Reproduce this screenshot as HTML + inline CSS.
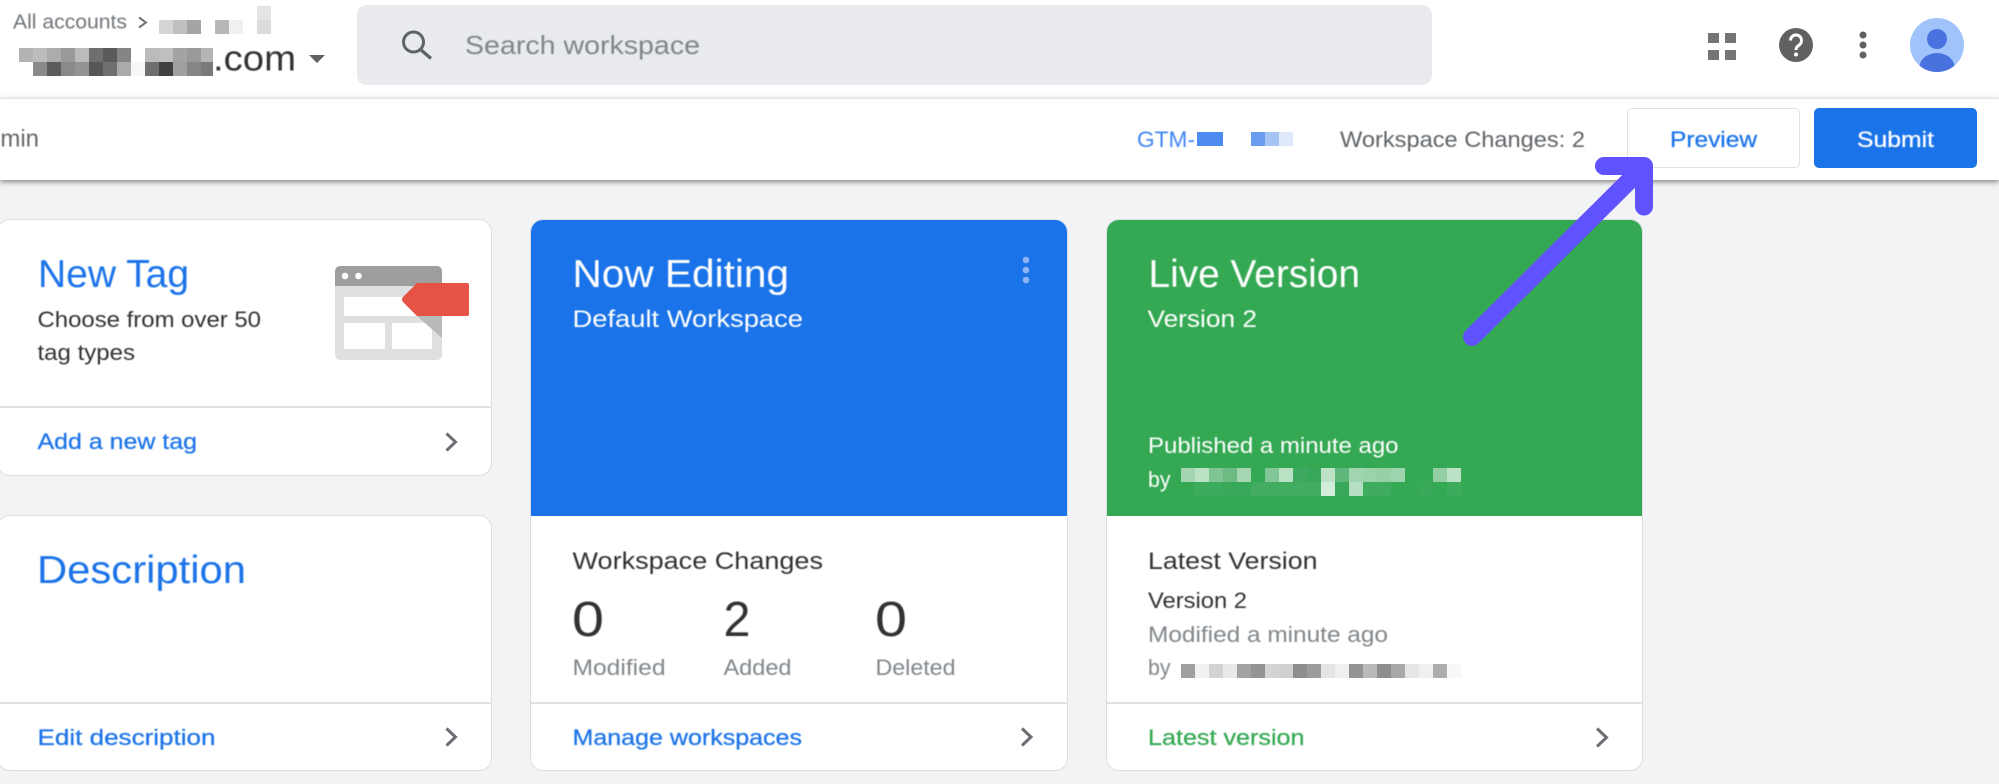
<!DOCTYPE html>
<html lang="en">
<head>
<meta charset="utf-8">
<title>Workspace overview</title>
<style>
html,body{margin:0;padding:0;background:#f1f3f4}
body{position:relative;width:1999px;height:784px;overflow:hidden;font-family:"Liberation Sans",sans-serif}
.abs{position:absolute;box-sizing:border-box}
.top{left:0;top:0;width:1999px;height:98px;background:#fff}
.bar{left:0;top:98px;width:1999px;height:82px;background:#fff;border-top:1.5px solid #e2e4ea;box-shadow:0 2px 5px rgba(0,0,0,.45)}
.search{left:357px;top:5px;width:1075px;height:80px;background:#e8eaed;border-radius:10px}
.card{background:#fff;border:1.5px solid #dcdee2;border-radius:13px;overflow:hidden}
.hd{position:absolute;left:-2px;right:-2px;top:-2px}
.dv{position:absolute;left:0;right:0;height:1.5px;background:#dfe1e4}
.btn{border-radius:5px}
svg{position:absolute;left:0;top:0}
text{font-family:"Liberation Sans",sans-serif;filter:url(#soft)}
.md{stroke-width:.25px;paint-order:stroke}
</style>
</head>
<body>
<div class="abs top"></div>
<div class="abs bar"></div>
<div class="abs search"></div>
<div class="abs btn" style="left:1627px;top:108px;width:173px;height:60px;background:#fff;border:1.5px solid #dfe1e5"></div>
<div class="abs btn" style="left:1814px;top:108px;width:163px;height:60px;background:#1a73e8"></div>

<div class="abs card" style="left:-3px;top:219px;width:495px;height:257px"><div class="dv" style="top:186px"></div></div>
<div class="abs card" style="left:-3px;top:515px;width:495px;height:256px"><div class="dv" style="top:186px"></div></div>
<div class="abs card" style="left:530px;top:219px;width:538px;height:552px"><div class="hd" style="height:298px;background:#1a73e8"></div><div class="dv" style="top:482px"></div></div>
<div class="abs card" style="left:1106px;top:219px;width:537px;height:552px"><div class="hd" style="height:298px;background:#34a853"></div><div class="dv" style="top:482px"></div></div>

<svg width="1999" height="784" viewBox="0 0 1999 784" xmlns="http://www.w3.org/2000/svg">
  <defs>
    <filter id="soft" x="-5%" y="-30%" width="110%" height="160%"><feGaussianBlur stdDeviation="0.4"/></filter>
    <clipPath id="av"><circle cx="1937" cy="45" r="27"/></clipPath>
  </defs>
  <!-- breadcrumb -->
  <text x="13" y="28.5" font-size="20" fill="#70757a" textLength="114" lengthAdjust="spacingAndGlyphs">All accounts</text>
  <path d="M139 17.5l7 5-7 5" fill="none" stroke="#70757a" stroke-width="2"/>
  <g shape-rendering="crispEdges">
    <rect x="159" y="20" width="14" height="14" fill="#d5d5d5"/><rect x="173" y="20" width="14" height="14" fill="#c0c0c0"/><rect x="187" y="20" width="14" height="14" fill="#a5a5a5"/>
    <rect x="215" y="20" width="14" height="14" fill="#b8b8b8"/><rect x="229" y="20" width="14" height="14" fill="#eef0f1"/>
    <rect x="257" y="6" width="14" height="14" fill="#e3e4e6"/><rect x="257" y="20" width="14" height="14" fill="#dcdcdc"/>
    <!-- account row 1 -->
    <rect x="19" y="48" width="14" height="14" fill="#b3b3b3"/><rect x="33" y="48" width="14" height="14" fill="#bcbcbc"/><rect x="47" y="48" width="14" height="14" fill="#acacac"/><rect x="61" y="48" width="14" height="14" fill="#999"/><rect x="75" y="48" width="14" height="14" fill="#bbb"/><rect x="89" y="48" width="14" height="14" fill="#6f6f6f"/><rect x="103" y="48" width="14" height="14" fill="#5a5a5a"/><rect x="117" y="48" width="14" height="14" fill="#858585"/><rect x="145" y="48" width="14" height="14" fill="#bbb"/><rect x="159" y="48" width="14" height="14" fill="#bfbfbf"/><rect x="173" y="48" width="14" height="14" fill="#a3a3a3"/><rect x="187" y="48" width="14" height="14" fill="#999"/><rect x="201" y="48" width="12" height="14" fill="#b4b6b5"/>
    <!-- account row 2 -->
    <rect x="33" y="62" width="14" height="14" fill="#8a8a8a"/><rect x="47" y="62" width="14" height="14" fill="#5c5c5c"/><rect x="61" y="62" width="14" height="14" fill="#8a8a8a"/><rect x="75" y="62" width="14" height="14" fill="#949494"/><rect x="89" y="62" width="14" height="14" fill="#575757"/><rect x="103" y="62" width="14" height="14" fill="#6f6f6f"/><rect x="117" y="62" width="14" height="14" fill="#aaa"/><rect x="131" y="62" width="14" height="14" fill="#f6f7f8"/><rect x="145" y="62" width="14" height="14" fill="#6e6e6e"/><rect x="159" y="62" width="14" height="14" fill="#404040"/><rect x="173" y="62" width="14" height="14" fill="#a0a0a0"/><rect x="187" y="62" width="14" height="14" fill="#868686"/><rect x="201" y="62" width="12" height="14" fill="#7a7a7a"/>
    <!-- GTM id -->
    <rect x="1197" y="132" width="26" height="14" fill="#4d8bf0"/><rect x="1251" y="132" width="14" height="14" fill="#6a9df0"/><rect x="1265" y="132" width="14" height="14" fill="#a5c4f5"/><rect x="1279" y="132" width="14" height="14" fill="#dfe9fb"/>
    <!-- published by row 1 -->
    <rect x="1181" y="468" width="14" height="14" fill="#a3d5b0"/><rect x="1195" y="468" width="14" height="14" fill="#bce2c6"/><rect x="1209" y="468" width="14" height="14" fill="#7fc492"/><rect x="1223" y="468" width="14" height="14" fill="#6dbb83"/><rect x="1237" y="468" width="14" height="14" fill="#a5d6b2"/><rect x="1265" y="468" width="14" height="14" fill="#82c697"/><rect x="1279" y="468" width="14" height="14" fill="#bbe1c5"/><rect x="1293" y="468" width="14" height="14" fill="#3fa95f"/><rect x="1307" y="468" width="14" height="14" fill="#37a85a"/><rect x="1321" y="468" width="14" height="14" fill="#bee2c8"/><rect x="1335" y="468" width="14" height="14" fill="#5fb67a"/><rect x="1349" y="468" width="14" height="14" fill="#a1d5b0"/><rect x="1363" y="468" width="14" height="14" fill="#9bd2aa"/><rect x="1377" y="468" width="14" height="14" fill="#97d0a7"/><rect x="1391" y="468" width="14" height="14" fill="#9dd3ad"/><rect x="1433" y="468" width="14" height="14" fill="#93cea4"/><rect x="1447" y="468" width="14" height="14" fill="#bbe2c7"/>
    <!-- published by row 2 -->
    <rect x="1195" y="482" width="28" height="14" fill="#3dab5c"/><rect x="1223" y="482" width="28" height="14" fill="#38a958"/><rect x="1251" y="482" width="70" height="14" fill="#42ad60"/><rect x="1321" y="482" width="14" height="14" fill="#d3eddb"/><rect x="1335" y="482" width="14" height="14" fill="#3aa85a"/><rect x="1349" y="482" width="14" height="14" fill="#b5dfc2"/><rect x="1363" y="482" width="28" height="14" fill="#3eab5d"/><rect x="1419" y="482" width="14" height="14" fill="#38a958"/><rect x="1447" y="482" width="14" height="14" fill="#3cab5b"/>
    <!-- modified by -->
    <rect x="1181" y="664" width="14" height="14" fill="#a0a0a0"/><rect x="1195" y="664" width="14" height="14" fill="#f1f1f2"/><rect x="1209" y="664" width="14" height="14" fill="#d2d3d3"/><rect x="1223" y="664" width="14" height="14" fill="#e8e9ea"/><rect x="1237" y="664" width="14" height="14" fill="#a3a3a3"/><rect x="1251" y="664" width="14" height="14" fill="#939393"/><rect x="1265" y="664" width="14" height="14" fill="#d3d4d6"/><rect x="1279" y="664" width="14" height="14" fill="#cfd0d0"/><rect x="1293" y="664" width="14" height="14" fill="#8d8d8f"/><rect x="1307" y="664" width="14" height="14" fill="#9c9c9c"/><rect x="1321" y="664" width="14" height="14" fill="#e3e4e6"/><rect x="1335" y="664" width="14" height="14" fill="#f0f0f1"/><rect x="1349" y="664" width="14" height="14" fill="#949494"/><rect x="1363" y="664" width="14" height="14" fill="#b9baba"/><rect x="1377" y="664" width="14" height="14" fill="#8e8e8e"/><rect x="1391" y="664" width="14" height="14" fill="#a9a9a9"/><rect x="1405" y="664" width="14" height="14" fill="#e5e6e8"/><rect x="1419" y="664" width="14" height="14" fill="#f0f0f0"/><rect x="1433" y="664" width="14" height="14" fill="#adadae"/><rect x="1447" y="664" width="14" height="14" fill="#f7f8f8"/>
  </g>
  <text x="213" y="70.5" font-size="36" fill="#333" textLength="83" lengthAdjust="spacingAndGlyphs">.com</text>
  <path d="M309 55h16l-8 8z" fill="#616161"/>

  <!-- search -->
  <circle cx="413.5" cy="42" r="10" fill="none" stroke="#5f6368" stroke-width="3"/>
  <path d="M420.500 49.500l10.500 9" fill="none" stroke="#5f6368" stroke-width="3.4"/>
  <text x="465" y="54" font-size="26" fill="#80868b" textLength="235" lengthAdjust="spacingAndGlyphs">Search workspace</text>

  <!-- top-right icons -->
  <g fill="#757575"><rect x="1708" y="33" width="11" height="10"/><rect x="1725" y="33" width="11" height="10"/><rect x="1708" y="50" width="11" height="10"/><rect x="1725" y="50" width="11" height="10"/></g>
  <circle cx="1796" cy="45" r="17" fill="#616161"/>
  <path d="M1790.500 40.500a5.500 5.500 0 1 1 8.800 4.400c-2 1.500-3.300 2.500-3.300 5.100" fill="none" stroke="#fff" stroke-width="3"/>
  <circle cx="1796" cy="54.500" r="2" fill="#fff"/>
  <g fill="#616161"><circle cx="1863" cy="35" r="3.500"/><circle cx="1863" cy="45" r="3.500"/><circle cx="1863" cy="55" r="3.500"/></g>
  <circle cx="1937" cy="45" r="27" fill="#a0c3fb"/>
  <circle cx="1937" cy="39" r="10" fill="#4a72df"/>
  <ellipse cx="1937" cy="67" rx="17.500" ry="14" fill="#4a72df" clip-path="url(#av)"/>

  <!-- toolbar text -->
  <text x="39" y="146.500" font-size="24" fill="#666" text-anchor="end">min</text>
  <text x="1137" y="147" font-size="22" fill="#4285f4" textLength="58" lengthAdjust="spacingAndGlyphs">GTM-</text>
  <text x="1340" y="147" font-size="22" fill="#5f6368" textLength="245" lengthAdjust="spacingAndGlyphs">Workspace Changes: 2</text>
  <text class="md" x="1670" y="147" font-size="22" fill="#1a73e8" stroke="#1a73e8" textLength="87" lengthAdjust="spacingAndGlyphs">Preview</text>
  <text class="md" x="1857" y="147" font-size="22" fill="#fff" stroke="#fff" textLength="77" lengthAdjust="spacingAndGlyphs">Submit</text>

  <!-- New Tag card -->
  <text x="38" y="287" font-size="39" fill="#1a73e8" textLength="151" lengthAdjust="spacingAndGlyphs">New Tag</text>
  <text x="37.500" y="327" font-size="22.500" fill="#333" textLength="223.500" lengthAdjust="spacingAndGlyphs">Choose from over 50</text>
  <text x="37.500" y="360" font-size="22.500" fill="#333" textLength="97.500" lengthAdjust="spacingAndGlyphs">tag types</text>
  <text class="md" x="37.500" y="449" font-size="22" fill="#1a73e8" stroke="#1a73e8" textLength="159.500" lengthAdjust="spacingAndGlyphs">Add a new tag</text>
  <path d="M446.500 433.500l9 8.500-9 8.500" fill="none" stroke="#6b6f73" stroke-width="3"/>
  <!-- tag illustration -->
  <rect x="335" y="266" width="107" height="94" rx="5" fill="#dfe0e2"/>
  <path d="M335 286v-15a5 5 0 0 1 5-5h97a5 5 0 0 1 5 5v15z" fill="#9e9e9e"/>
  <circle cx="345" cy="276" r="3.300" fill="#fff"/><circle cx="358.500" cy="276" r="3.300" fill="#fff"/>
  <rect x="344" y="297" width="88" height="19" fill="#fff"/>
  <rect x="344" y="323" width="41" height="26" fill="#fff"/><rect x="392" y="323" width="40" height="26" fill="#fff"/>
  <path d="M417 316h25v22z" fill="#b7b9ba"/>
  <path d="M417 283h50a2 2 0 0 1 2 2v29a2 2 0 0 1-2 2h-50l-14-14a4 4 0 0 1 0-5z" fill="#e65245"/>

  <!-- Description card -->
  <text x="37" y="583" font-size="39" fill="#1a73e8" textLength="209" lengthAdjust="spacingAndGlyphs">Description</text>
  <text class="md" x="37.500" y="745" font-size="22" fill="#1a73e8" stroke="#1a73e8" textLength="178" lengthAdjust="spacingAndGlyphs">Edit description</text>
  <path d="M446.500 728.500l9 8.500-9 8.500" fill="none" stroke="#6b6f73" stroke-width="3"/>

  <!-- Now Editing card -->
  <text x="572.500" y="287" font-size="39" fill="#fff" textLength="216.500" lengthAdjust="spacingAndGlyphs">Now Editing</text>
  <text x="572.500" y="327" font-size="24" fill="#fff" textLength="230.500" lengthAdjust="spacingAndGlyphs">Default Workspace</text>
  <g fill="#8ab4f5"><circle cx="1026" cy="260" r="3.300"/><circle cx="1026" cy="270" r="3.300"/><circle cx="1026" cy="280" r="3.300"/></g>
  <text x="572.500" y="569" font-size="24.500" fill="#333" textLength="250.500" lengthAdjust="spacingAndGlyphs">Workspace Changes</text>
  <text x="572" y="636" font-size="49" fill="#333" textLength="32" lengthAdjust="spacingAndGlyphs">0</text>
  <text x="723.500" y="636" font-size="49" fill="#333" textLength="27" lengthAdjust="spacingAndGlyphs">2</text>
  <text x="875" y="636" font-size="49" fill="#333" textLength="32" lengthAdjust="spacingAndGlyphs">0</text>
  <text x="572.500" y="675" font-size="22" fill="#80868b" textLength="93" lengthAdjust="spacingAndGlyphs">Modified</text>
  <text x="723.500" y="675" font-size="22" fill="#80868b" textLength="68" lengthAdjust="spacingAndGlyphs">Added</text>
  <text x="875.500" y="675" font-size="22" fill="#80868b" textLength="80" lengthAdjust="spacingAndGlyphs">Deleted</text>
  <text class="md" x="572.500" y="745" font-size="22" fill="#1a73e8" stroke="#1a73e8" textLength="229.500" lengthAdjust="spacingAndGlyphs">Manage workspaces</text>
  <path d="M1022 728.500l9 8.500-9 8.500" fill="none" stroke="#6b6f73" stroke-width="3"/>

  <!-- Live Version card -->
  <text x="1148.500" y="287" font-size="39" fill="#fff" textLength="211.500" lengthAdjust="spacingAndGlyphs">Live Version</text>
  <text x="1147.500" y="327" font-size="24" fill="#fff" textLength="109.500" lengthAdjust="spacingAndGlyphs">Version 2</text>
  <text x="1148" y="453" font-size="22.500" fill="#fff" textLength="250.500" lengthAdjust="spacingAndGlyphs">Published a minute ago</text>
  <text x="1148" y="487" font-size="22.500" fill="#fff" textLength="22.500" lengthAdjust="spacingAndGlyphs">by</text>
  <text x="1148" y="569" font-size="24.500" fill="#333" textLength="169.500" lengthAdjust="spacingAndGlyphs">Latest Version</text>
  <text x="1148" y="608" font-size="22" fill="#333" textLength="99" lengthAdjust="spacingAndGlyphs">Version 2</text>
  <text x="1148" y="642" font-size="22" fill="#80868b" textLength="240" lengthAdjust="spacingAndGlyphs">Modified a minute ago</text>
  <text x="1148" y="675" font-size="22" fill="#80868b" textLength="22.500" lengthAdjust="spacingAndGlyphs">by</text>
  <text class="md" x="1148" y="745" font-size="22" fill="#34a853" stroke="#34a853" textLength="156.500" lengthAdjust="spacingAndGlyphs">Latest version</text>
  <path d="M1597 728.500l9.500 9-9.500 9" fill="none" stroke="#6b6f73" stroke-width="3"/>

  <!-- annotation arrow -->
  <g fill="none" stroke="#6152ff" stroke-linecap="round" stroke-linejoin="round" stroke-width="18">
    <path d="M1472 337L1640 170"/>
    <path d="M1604 166H1644V206.500"/>
  </g>
</svg>
</body>
</html>
